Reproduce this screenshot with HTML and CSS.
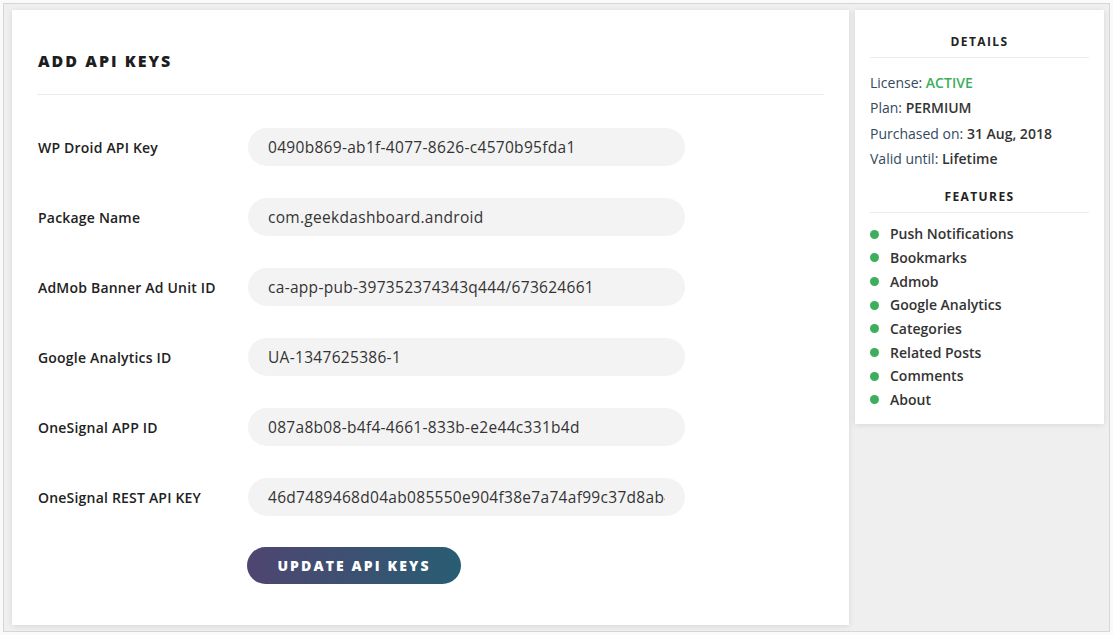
FILE: index.html
```html
<!DOCTYPE html>
<html>
<head>
<meta charset="utf-8">
<link rel="stylesheet" href="styles.css">
</head>
<body>
<div class="frame">
  <main class="panel main">
    <h1 class="title">ADD API KEYS</h1>
    <div class="rule"></div>
    <form class="form">
      <div class="row"><label class="label">WP Droid API Key</label><input class="field" value="0490b869-ab1f-4077-8626-c4570b95fda1"></div>
      <div class="row"><label class="label">Package Name</label><input class="field" value="com.geekdashboard.android"></div>
      <div class="row"><label class="label">AdMob Banner Ad Unit ID</label><input class="field" value="ca-app-pub-397352374343q444/673624661"></div>
      <div class="row"><label class="label">Google Analytics ID</label><input class="field" value="UA-1347625386-1"></div>
      <div class="row"><label class="label">OneSignal APP ID</label><input class="field" value="087a8b08-b4f4-4661-833b-e2e44c331b4d"></div>
      <div class="row"><label class="label">OneSignal REST API KEY</label><input class="field" value="46d7489468d04ab085550e904f38e7a74af99c37d8ab4a1c"></div>
      <div class="actions"><button type="button" class="btn">UPDATE API KEYS</button></div>
    </form>
  </main>
  <aside class="panel side">
    <h2 class="side-title">DETAILS</h2>
    <ul class="details">
      <li><span class="k">License:</span> <span class="v active">ACTIVE</span></li>
      <li><span class="k">Plan:</span> <span class="v">PERMIUM</span></li>
      <li><span class="k">Purchased on:</span> <span class="v">31 Aug, 2018</span></li>
      <li><span class="k">Valid until:</span> <span class="v">Lifetime</span></li>
    </ul>
    <h2 class="side-title features-title">FEATURES</h2>
    <ul class="features">
      <li>Push Notifications</li>
      <li>Bookmarks</li>
      <li>Admob</li>
      <li>Google Analytics</li>
      <li>Categories</li>
      <li>Related Posts</li>
      <li>Comments</li>
      <li>About</li>
    </ul>
  </aside>
</div>
</body>
</html>
```
FILE: styles.css
```css
* { box-sizing: border-box; }
html, body { margin: 0; padding: 0; background: #fafafa; }
body {
  font-family: "Open Sans", "Liberation Sans", sans-serif;
  color: #333;
  width: 1113px;
  height: 635px;
  overflow: hidden;
}
.frame {
  margin: 3px;
  height: 629px;
  border: 1px solid #d6d6d6;
  background: #efefef;
  padding: 6px 4px 6px 8px;
  display: flex;
  align-items: flex-start;
  gap: 6px;
}
.panel {
  background: #fff;
  box-shadow: 0 1px 6px rgba(0,0,0,0.10);
}
.main {
  width: 837px;
  height: 615px;
  padding: 40px 25px 0 26px;
}
.title {
  margin: 0;
  font-size: 16px;
  line-height: 22px;
  font-weight: 800;
  letter-spacing: 2px;
  color: #1e1e1e;
}
.rule {
  height: 1px;
  background: #ececec;
  margin: 22px 0 33px -1px;
}
.form { display: flex; flex-direction: column; gap: 32px; }
.row { display: flex; align-items: center; height: 38px; }
.label {
  width: 210px;
  flex: none;
  font-size: 14px;
  font-weight: 600;
  letter-spacing: 0.2px;
  color: #222;
}
.field {
  width: 437px;
  height: 38px;
  border: none;
  outline: none;
  border-radius: 19px;
  background: #f3f3f3;
  padding: 0 20px;
  font-family: "Open Sans", "Liberation Sans", sans-serif;
  font-size: 15.5px;
  letter-spacing: 0.3px;
  color: #333;
}
.actions { padding-left: 209px; margin-top: -1px; }
.btn {
  width: 214px;
  height: 37px;
  border: none;
  border-radius: 19px;
  background: linear-gradient(90deg, #4f4571 0%, #285d73 100%);
  color: #fff;
  font-family: "Open Sans", "Liberation Sans", sans-serif;
  font-size: 14px;
  font-weight: 800;
  letter-spacing: 2.1px;
  padding: 0;
}
.side {
  width: 249px;
  padding: 24px 15px 12px;
}
.side-title {
  margin: 0;
  text-align: center;
  font-size: 12px;
  line-height: 16px;
  font-weight: 700;
  letter-spacing: 1.4px;
  color: #222;
  padding-bottom: 7px;
  border-bottom: 1px solid #ececec;
}
.features-title { margin-top: 18px; }
ul { list-style: none; margin: 0; padding: 0; }
.details { margin-top: 12px; }
.details li { font-size: 14px; line-height: 25.3px; }
.k { color: #34495e; }
.v { color: #333; font-weight: 600; }
.v.active { color: #3cae5c; }
.features { margin-top: 9px; }
.features li {
  font-size: 14px;
  line-height: 23.7px;
  font-weight: 600;
  color: #333;
  display: flex;
  align-items: center;
}
.features li::before {
  content: "";
  width: 9px;
  height: 9px;
  border-radius: 50%;
  background: #3cae5c;
  margin: 0 11px 0 0;
  flex: none;
}
```
